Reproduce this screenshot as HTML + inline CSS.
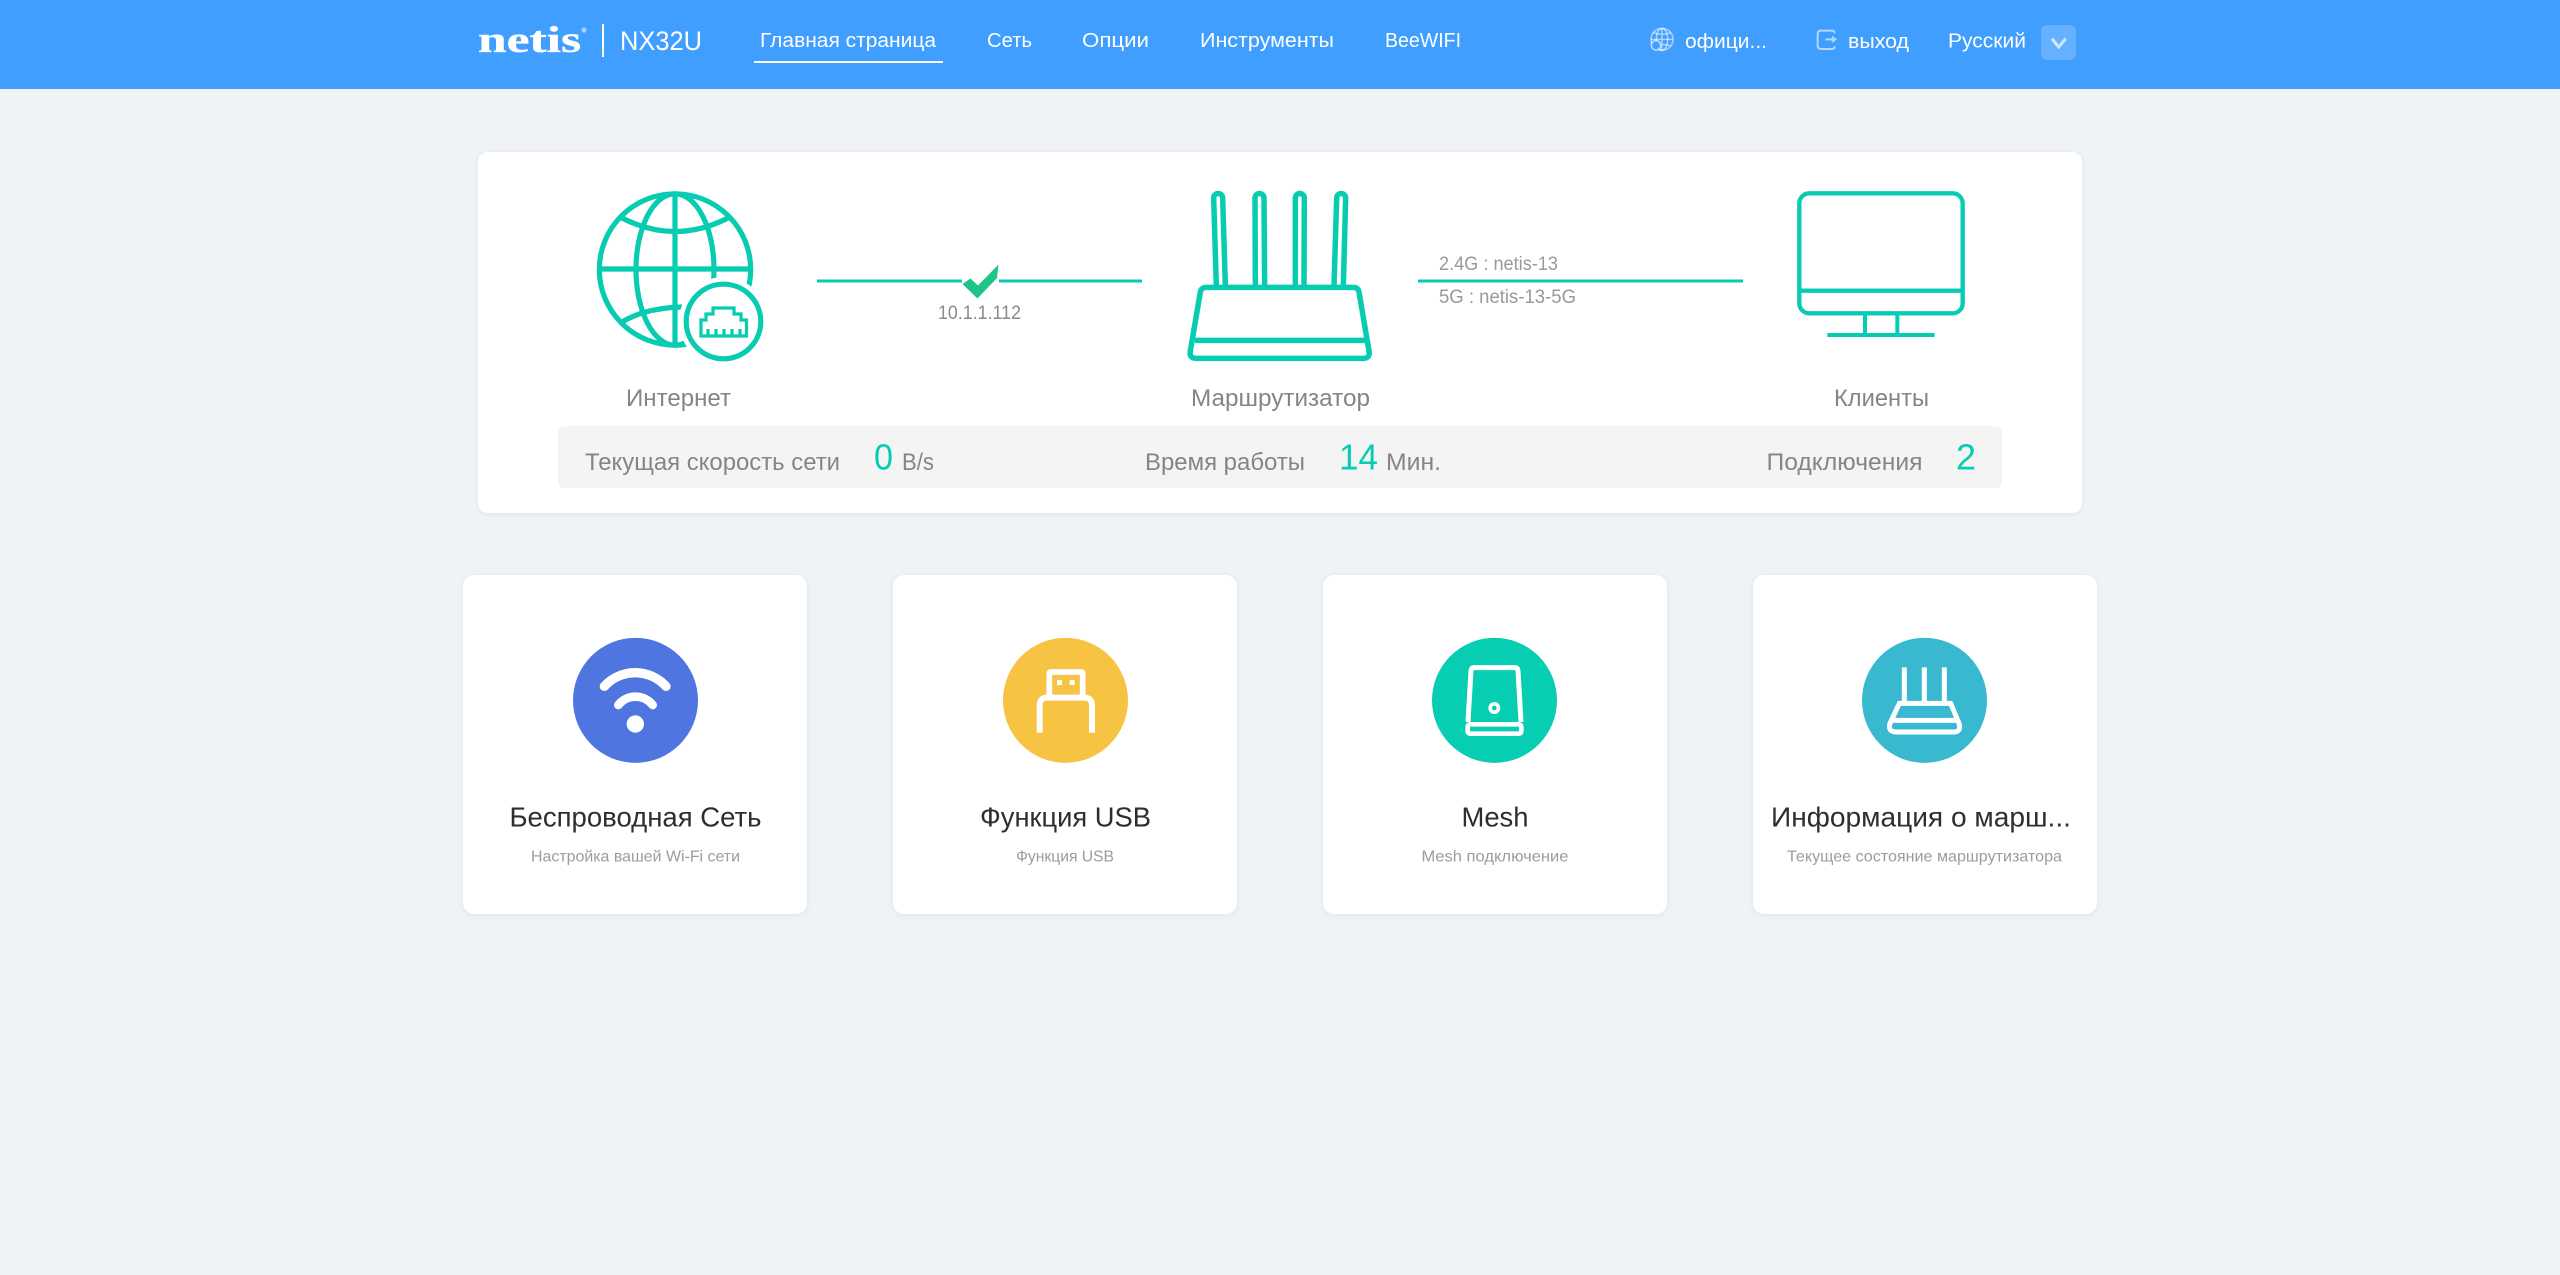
<!DOCTYPE html>
<html lang="ru">
<head>
<meta charset="utf-8">
<title>netis NX32U</title>
<style>
html,body{margin:0;padding:0;width:2560px;height:1275px;overflow:hidden;background:#f0f3f6;font-family:"Liberation Sans","Noto Sans CJK SC",sans-serif}
.hdr{position:absolute;left:0;top:0;width:2560px;height:89px;background:#409eff}
.panel{position:absolute;left:478px;top:152px;width:1604px;height:361px;background:#fff;border-radius:10px;box-shadow:0 1px 6px rgba(110,130,180,.14)}
.bar{position:absolute;left:558px;top:426px;width:1444px;height:62px;background:#f4f4f4;border-radius:6px}
.card{position:absolute;top:575px;width:344px;height:339px;background:#fff;border-radius:11px;box-shadow:0 1px 7px rgba(110,130,180,.13)}
.ddb{position:absolute;left:2041px;top:25px;width:35px;height:35px;background:rgba(255,255,255,.2);border-radius:6px}
svg.ov{position:absolute;left:0;top:0}
text{font-family:"Liberation Sans","Noto Sans CJK SC",sans-serif}
.n{font-size:20px;fill:#fff}
.l{font-size:24px;fill:#858585}
.v{font-size:36px;fill:#08ccb2}
.s{font-size:19px;fill:#999}
.t{font-size:28px;fill:#2e2e2e}
.u{font-size:16px;fill:#9c9c9c}
</style>
</head>
<body>
<div class="hdr"></div>
<div class="ddb"></div>
<div class="panel"></div>
<div class="bar"></div>
<div class="card" style="left:463px"></div>
<div class="card" style="left:893px"></div>
<div class="card" style="left:1323px"></div>
<div class="card" style="left:1753px"></div>

<svg class="ov" width="2560" height="1275" viewBox="0 0 2560 1275" xmlns="http://www.w3.org/2000/svg">
  <!-- header -->
  <text x="478" y="52" textLength="103" lengthAdjust="spacingAndGlyphs" style="font-family:'Liberation Serif',serif;font-weight:700;font-size:37px;fill:#fff;stroke:#fff;stroke-width:.35">netis</text>
  <circle cx="584" cy="30" r="2.6" fill="#fff" fill-opacity=".55"/>
  <rect x="602" y="24" width="2" height="33" fill="#fff"/>
  <text x="620" y="50" textLength="82" lengthAdjust="spacingAndGlyphs" style="font-size:27px;fill:#fff">NX32U</text>

  <text class="n" x="760" y="47" textLength="176" lengthAdjust="spacingAndGlyphs">Главная страница</text>
  <rect x="754" y="61" width="189" height="2" fill="#fff"/>
  <text class="n" x="987" y="47" textLength="45" lengthAdjust="spacingAndGlyphs">Сеть</text>
  <text class="n" x="1082" y="47" textLength="67" lengthAdjust="spacingAndGlyphs">Опции</text>
  <text class="n" x="1200" y="47" textLength="134" lengthAdjust="spacingAndGlyphs">Инструменты</text>
  <text class="n" x="1385" y="47" textLength="76" lengthAdjust="spacingAndGlyphs">BeeWIFI</text>

  <g transform="translate(1600 0) scale(.33333)" fill="none" stroke="#fff" stroke-opacity=".55" stroke-width="4.5">
    <circle cx="186" cy="118" r="33"/>
    <ellipse cx="186" cy="118" rx="17" ry="33"/>
    <path d="M186 85V151M153 118H219M160 98Q186 108 212 98M160 138Q186 128 212 138"/>
    <circle cx="168" cy="136" r="14" fill="#409eff" stroke-opacity=".65"/>
  </g>
  <text class="n" x="1685" y="48" textLength="82" lengthAdjust="spacingAndGlyphs">офици...</text>

  <g transform="translate(1600 0) scale(.33333)" fill="none" stroke="#fff" stroke-opacity=".6" stroke-width="6">
    <path d="M704 100Q704 92 696 92H663Q653 92 653 102V137Q653 147 663 147H696Q704 147 704 139"/>
    <path d="M676 118H706M696 110L706 118L696 126"/>
  </g>
  <text class="n" x="1848" y="48" textLength="61" lengthAdjust="spacingAndGlyphs">выход</text>
  <text class="n" x="1948" y="47.5" textLength="78" lengthAdjust="spacingAndGlyphs">Русский</text>
  <path transform="translate(1600 0) scale(.33333)" d="M1356 116L1376 141L1397 116" fill="none" stroke="#fff" stroke-opacity=".7" stroke-width="9"/>

  <!-- globe -->
  <g fill="none" stroke="#08ccb2" stroke-width="5.2">
    <circle cx="675" cy="269.5" r="75.7"/>
    <ellipse cx="675" cy="269.5" rx="39" ry="75.7"/>
    <path d="M675 193V346M599 269H751M622 218Q675 245 728 218M622 322Q645 308 682 307"/>
  </g>
  <circle cx="723.5" cy="321.5" r="44.5" fill="#fff"/>
  <circle cx="723.5" cy="321.5" r="37.3" fill="none" stroke="#08ccb2" stroke-width="5.2"/>
  <path d="M701 336V320H706V314H713V308H734V314H741V320H746.5V336ZM708 336V329M716 336V329M724 336V329M732 336V329M740 336V329" fill="none" stroke="#08ccb2" stroke-width="3.2"/>
  <text class="l" x="626" y="406" textLength="105" lengthAdjust="spacingAndGlyphs">Интернет</text>

  <!-- link 1 -->
  <rect x="817" y="279.5" width="145" height="3" fill="#08ccb2"/>
  <rect x="999" y="279.5" width="143" height="3" fill="#08ccb2"/>
  <polygon points="962.5,284 970.5,278.5 978,285.5 998.5,264.5 997,278 977.4,298.5" fill="#1ec686"/>
  <text x="938" y="319" textLength="83" lengthAdjust="spacingAndGlyphs" style="font-size:19px;fill:#8a8a8a">10.1.1.112</text>

  <!-- router -->
  <g transform="translate(1140 160) scale(.33333)" fill="none" stroke="#08ccb2" stroke-width="16.5">
    <path d="M229 378L221 114A13.5 13.5 0 0 1 248 114L256 378"/>
    <path d="M346 378L345 114A13.5 13.5 0 0 1 372 114L374 378"/>
    <path d="M466 378L466 114A13.5 13.5 0 0 1 493 114L492 378"/>
    <path d="M582 378L590 114A13.5 13.5 0 0 1 617 114L610 378"/>
    <path d="M200 382H640Q654 382 657 396L687 573Q691 595 670 595H169Q147 595 151 573L181 396Q184 382 200 382Z"/>
    <path d="M165 541H675"/>
  </g>
  <text class="l" x="1191" y="406" textLength="179" lengthAdjust="spacingAndGlyphs">Маршрутизатор</text>

  <!-- link 2 -->
  <rect x="1418" y="279.5" width="325" height="3" fill="#08ccb2"/>
  <text class="s" x="1439" y="270" textLength="119" lengthAdjust="spacingAndGlyphs">2.4G : netis-13</text>
  <text class="s" x="1439" y="303" textLength="137" lengthAdjust="spacingAndGlyphs">5G : netis-13-5G</text>

  <!-- monitor -->
  <g transform="translate(1640 160) scale(.33333)" fill="none" stroke="#08ccb2">
    <rect x="478" y="100" width="490" height="360" rx="30" stroke-width="13"/>
    <path d="M478 392H968" stroke-width="13"/>
    <path d="M675 460V522M772 460V522M562 525H884" stroke-width="12"/>
  </g>
  <text class="l" x="1834" y="406" textLength="95" lengthAdjust="spacingAndGlyphs">Клиенты</text>

  <!-- stats -->
  <text class="l" x="585" y="470" textLength="255" lengthAdjust="spacingAndGlyphs">Текущая скорость сети</text>
  <text class="v" x="874" y="469.5" textLength="19" lengthAdjust="spacingAndGlyphs">0</text>
  <text class="l" x="902" y="470" textLength="32" lengthAdjust="spacingAndGlyphs">B/s</text>
  <text class="l" x="1145" y="470" textLength="160" lengthAdjust="spacingAndGlyphs">Время работы</text>
  <text class="v" x="1339" y="469.5" textLength="39" lengthAdjust="spacingAndGlyphs">14</text>
  <text class="l" x="1386" y="470" textLength="55" lengthAdjust="spacingAndGlyphs">Мин.</text>
  <text class="l" x="1766.5" y="470" textLength="156" lengthAdjust="spacingAndGlyphs">Подключения</text>
  <text class="v" x="1956" y="469.5" textLength="20" lengthAdjust="spacingAndGlyphs">2</text>

  <!-- card 1 -->
  <g transform="translate(450 560) scale(.33333)">
    <circle cx="556.5" cy="421" r="187.5" fill="#4f76e0"/>
    <g fill="none" stroke="#fff" stroke-linecap="round">
      <path d="M463 379A125 125 0 0 1 648 379" stroke-width="28"/>
      <path d="M505 435A65.5 65.5 0 0 1 608 435" stroke-width="26"/>
    </g>
    <circle cx="556" cy="492" r="26" fill="#fff"/>
  </g>
  <text class="t" x="509.5" y="826.5" textLength="252" lengthAdjust="spacingAndGlyphs">Беспроводная Сеть</text>
  <text class="u" x="531" y="861.5" textLength="209" lengthAdjust="spacingAndGlyphs">Настройка вашей Wi-Fi сети</text>

  <!-- card 2 -->
  <g transform="translate(880 560) scale(.33333)">
    <circle cx="556.5" cy="421" r="187.5" fill="#f7c342"/>
    <g fill="none" stroke="#fff">
      <path d="M508 412V340Q508 336 512 336H604Q608 336 608 340V412" stroke-width="17"/>
      <path d="M479 518V436Q479 413 502 413H613Q636 413 636 436V518" stroke-width="18"/>
    </g>
    <rect x="531" y="360" width="15" height="15" fill="#fff"/>
    <rect x="569" y="360" width="15" height="15" fill="#fff"/>
  </g>
  <text class="t" x="980" y="826.5" textLength="171" lengthAdjust="spacingAndGlyphs">Функция USB</text>
  <text class="u" x="1016" y="861.5" textLength="98" lengthAdjust="spacingAndGlyphs">Функция USB</text>

  <!-- card 3 -->
  <g transform="translate(1310 560) scale(.33333)">
    <circle cx="553.5" cy="421" r="187.5" fill="#07cdb3"/>
    <g fill="none" stroke="#fff">
      <path d="M474 486L483 332Q484 323 492 323H616Q623 323 624 332L633 486" stroke-width="15"/>
      <rect x="473" y="493" width="161" height="28" rx="7" stroke-width="14"/>
      <circle cx="553" cy="444" r="12.5" stroke-width="11"/>
    </g>
  </g>
  <text class="t" x="1461.5" y="826.5" textLength="67" lengthAdjust="spacingAndGlyphs">Mesh</text>
  <text class="u" x="1421.5" y="861.5" textLength="147" lengthAdjust="spacingAndGlyphs">Mesh подключение</text>

  <!-- card 4 -->
  <g transform="translate(1740 560) scale(.33333)">
    <circle cx="553.5" cy="421" r="187.5" fill="#38b9cf"/>
    <g fill="none" stroke="#fff" stroke-width="15">
      <path d="M493 322V428M553 322V428M613 322V428"/>
      <path d="M478 430H632L657 490Q665 516 640 516H470Q442 516 450 490Z"/>
      <path d="M455 481H655"/>
    </g>
  </g>
  <text class="t" x="1771" y="826.5" textLength="300" lengthAdjust="spacingAndGlyphs">Информация о марш...</text>
  <text class="u" x="1787" y="861.5" textLength="275" lengthAdjust="spacingAndGlyphs">Текущее состояние маршрутизатора</text>
</svg>
</body>
</html>
